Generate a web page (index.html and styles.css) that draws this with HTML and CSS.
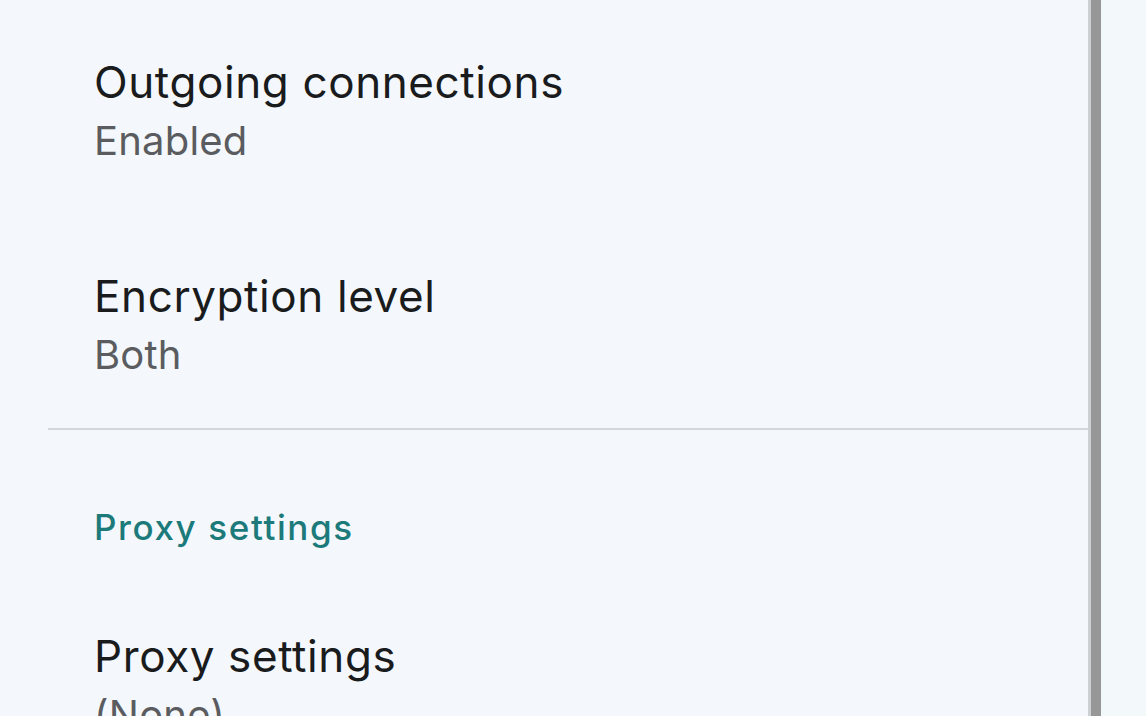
FILE: index.html
```html
<!DOCTYPE html>
<html lang="en">
<head>
<meta charset="utf-8">
<title>Settings</title>
<link rel="stylesheet" href="styles.css">
</head>
<body>
<div class="screen">
  <main class="prefs">
    <section class="group">
      <div class="pref">
        <div class="pref-title">Outgoing connections</div>
        <div class="pref-summary">Enabled</div>
      </div>
      <div class="pref pref-last">
        <div class="pref-title">Encryption level</div>
        <div class="pref-summary">Both</div>
      </div>
    </section>
    <hr class="sep">
    <section class="group">
      <div class="category">Proxy settings</div>
      <div class="pref">
        <div class="pref-title">Proxy settings</div>
        <div class="pref-summary">(None)</div>
      </div>
    </section>
  </main>
  <div class="pane-bar"></div>
  <aside class="side"></aside>
</div>
</body>
</html>
```

FILE: styles.css
```css
html, body {
  margin: 0;
  padding: 0;
  height: 100%;
  overflow: hidden;
  background: #f4f8fc;
}
.screen {
  display: flex;
  height: 716px;
  font-family: Inter, Roboto, "Noto Sans", sans-serif;
}
.prefs {
  flex: 1;
  padding-top: 6px;
  min-width: 0;
}
.group {
  padding-left: 94px;
}
.pref {
  padding: 48px 0 48px;
}
.pref-last {
  padding-bottom: 40px;
}
.pref-title {
  font-size: 44px;
  line-height: 56px;
  letter-spacing: 0.6px;
  color: #1a1b1d;
  white-space: nowrap;
}
.pref-summary {
  font-size: 40px;
  line-height: 62px;
  letter-spacing: 0.2px;
  color: #5a5c60;
  white-space: nowrap;
}
.sep {
  margin: 2px 0 0 48px;
  border: 0;
  height: 2px;
  background: #d3d6da;
}
.category {
  padding-top: 72px;
  font-size: 35px;
  line-height: 50px;
  letter-spacing: 1.6px;
  font-weight: 500;
  color: #1d7a7b;
}
.category + .pref {
  padding-top: 76px;
}
.pane-bar {
  width: 10px;
  margin-left: -2px;
  background: #979797;
  border-left: 3px solid #cdd0d3;
}
.side {
  width: 45px;
  background: #f3f8fb;
}
```
